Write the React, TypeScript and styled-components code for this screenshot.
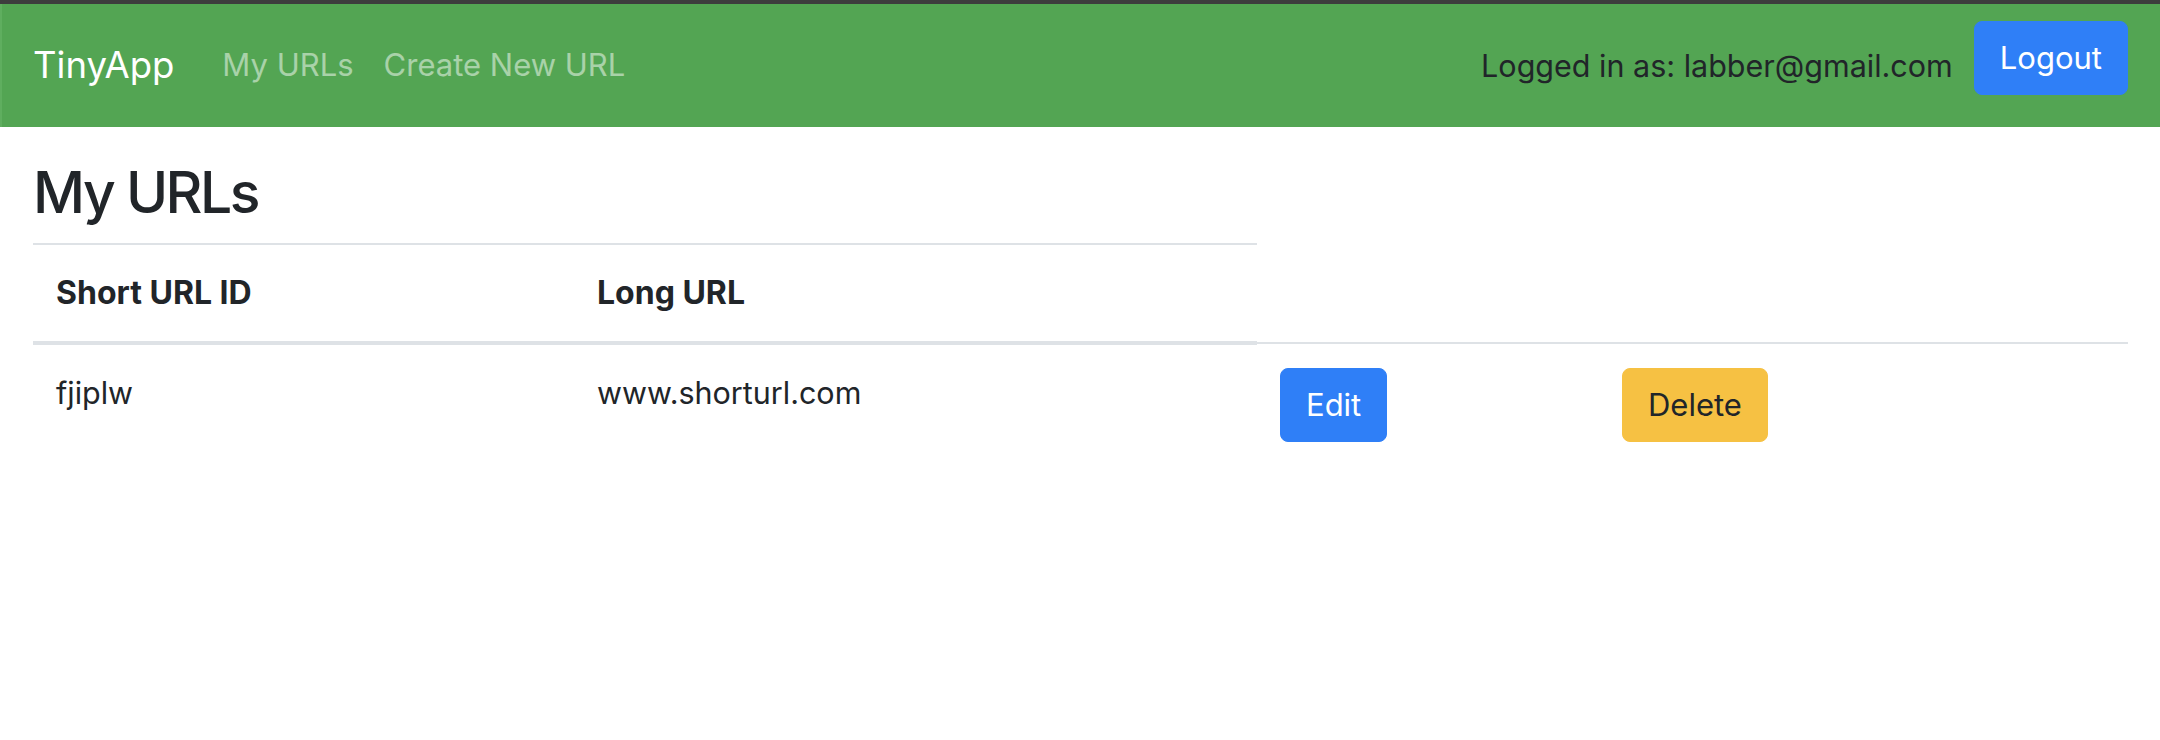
import React from "react";
import styled, { createGlobalStyle } from "styled-components";

const GlobalStyle = createGlobalStyle`
  html, body {
    margin: 0;
    padding: 0;
    background: #ffffff;
  }
  body {
    font-family: Inter, "Noto Sans", "Liberation Sans", sans-serif;
    color: #212529;
    font-size: 31px;
    line-height: 1.5;
  }
  * { box-sizing: border-box; }
`;

const Page = styled.div`
  width: 2160px;
  min-height: 740px;
  background: #ffffff;
`;

const WindowEdge = styled.div`
  height: 4px;
  background: #3d3d3d;
`;

const Navbar = styled.nav`
  height: 123px;
  background: #53a553;
  border-left: 2px solid #5fae5f;
  display: flex;
  align-items: center;
  padding: 0 32px 0 31px;
`;

const Brand = styled.a`
  font-size: 36.5px;
  color: #ffffff;
  text-decoration: none;
  margin-right: 33px;
  line-height: 1.5;
`;

const NavLinks = styled.div`
  display: flex;
  align-items: center;
`;

const NavLink = styled.a`
  color: rgba(255, 255, 255, 0.5);
  text-decoration: none;
  padding: 0 15px;
  font-size: 31px;
`;

const Spacer = styled.div`
  flex: 1;
`;

const UserInfo = styled.span`
  color: #212529;
  font-size: 30.5px;
  margin-right: 21px;
`;

const LogoutForm = styled.form`
  display: flex;
  padding-bottom: 15px;
  margin: 0;
`;

const Button = styled.button<{ $variant: "primary" | "warning" }>`
  font-family: inherit;
  font-size: 31px;
  line-height: 48px;
  padding: 12px 25px;
  border-radius: 8px;
  border: 1px solid ${(p) => (p.$variant === "primary" ? "#2f7ff7" : "#f6c143")};
  background: ${(p) => (p.$variant === "primary" ? "#2f7ff7" : "#f6c143")};
  color: ${(p) => (p.$variant === "primary" ? "#ffffff" : "#212529")};
  cursor: pointer;
`;

const Main = styled.main`
  padding: 29px 32px 0 33px;
`;

const Heading = styled.h2`
  margin: 0 0 13px 0;
  font-size: 57px;
  font-weight: 500;
  letter-spacing: -2.5px;
  line-height: 74px;
`;

const Table = styled.table`
  width: 100%;
  border-collapse: collapse;
  table-layout: fixed;
`;

const Col = styled.col<{ $w: number }>`
  width: ${(p) => p.$w}px;
`;

const Th = styled.th`
  text-align: left;
  font-weight: 700;
  font-size: 32px;
  line-height: 48px;
  padding: 24px 23px;
  border-top: 2px solid #dee2e6;
  border-bottom: 4px solid #dee2e6;
  vertical-align: bottom;
`;

const Td = styled.td`
  font-size: 30.5px;
  line-height: 48px;
  padding: 24px 23px;
  border-top: 2px solid #dee2e6;
  vertical-align: top;
`;

const urls = [{ id: "fjiplw", long: "www.shorturl.com" }];

export default function App() {
  return (
    <Page>
      <GlobalStyle />
      <WindowEdge />
      <Navbar>
        <Brand href="#">TinyApp</Brand>
        <NavLinks>
          <NavLink href="#">My URLs</NavLink>
          <NavLink href="#">Create New URL</NavLink>
        </NavLinks>
        <Spacer />
        <UserInfo>Logged in as: labber@gmail.com</UserInfo>
        <LogoutForm onSubmit={(e) => e.preventDefault()}>
          <Button $variant="primary" type="submit">Logout</Button>
        </LogoutForm>
      </Navbar>
      <Main>
        <Heading>My URLs</Heading>
        <Table>
          <colgroup>
            <Col $w={541} />
            <Col $w={683} />
            <Col $w={342} />
            <Col $w={529} />
          </colgroup>
          <thead>
            <tr>
              <Th>Short URL ID</Th>
              <Th>Long URL</Th>
            </tr>
          </thead>
          <tbody>
            {urls.map((u) => (
              <tr key={u.id}>
                <Td>{u.id}</Td>
                <Td>{u.long}</Td>
                <Td>
                  <Button $variant="primary">Edit</Button>
                </Td>
                <Td>
                  <Button $variant="warning">Delete</Button>
                </Td>
              </tr>
            ))}
          </tbody>
        </Table>
      </Main>
    </Page>
  );
}
